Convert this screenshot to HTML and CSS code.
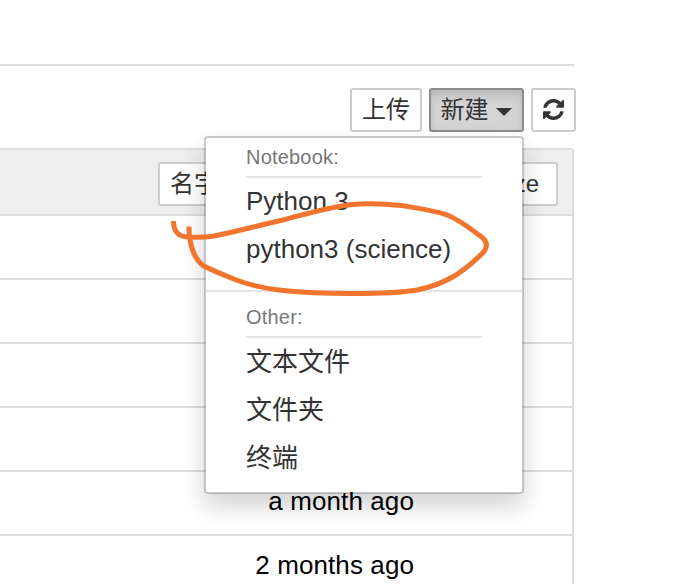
FILE: index.html
```html
<!DOCTYPE html>
<html lang="zh-CN">
<head>
<meta charset="utf-8">
<title>Jupyter</title>
<link rel="stylesheet" href="styles.css">
</head>
<body>
<main class="page">
  <div class="tabs"></div>
  <div class="toolbar">
    <button class="btn upload">上传</button>
    <div class="dropdown">
      <button class="btn active">新建<span class="caret"></span></button>
      <div class="menu">
        <div class="heading">Notebook:</div>
        <a class="item kernel">Python 3</a>
        <a class="item kernel">python3 (science)</a>
        <div class="divider"></div>
        <div class="heading">Other:</div>
        <a class="item">文本文件</a>
        <a class="item">文件夹</a>
        <a class="item">终端</a>
      </div>
    </div>
    <button class="btn refresh" aria-label="刷新">
      <svg viewBox="0 0 1536 1536"><path d="M1511 928q0 5-1 7-64 268-268 434.5t-478 166.5q-146 0-282.5-55t-243.5-157l-129 129q-19 19-45 19t-45-19-19-45v-448q0-26 19-45t45-19h448q26 0 45 19t19 45-19 45l-137 137q71 66 161 102t187 36q134 0 250-65t186-179q11-17 53-117 8-23 30-23h192q13 0 22.5 9.5t9.5 22.5zm25-800v448q0 26-19 45t-45 19h-448q-26 0-45-19t-19-45 19-45l138-138q-148-137-349-137-134 0-250 65t-186 179q-11 17-53 117-8 23-30 23h-199q-13 0-22.5-9.5t-9.5-22.5v-7q65-268 270-434.5t480-166.5q146 0 284 55.5t245 156.5l130-129q19-19 45-19t45 19 19 45z"/></svg>
    </button>
  </div>
  <div class="list">
    <div class="list-header">
      <button class="btn sort-name">名字</button>
      <button class="btn sort-size">size</button>
    </div>
    <div class="row"></div>
    <div class="row"></div>
    <div class="row"></div>
    <div class="row"></div>
    <div class="row">a month ago</div>
    <div class="row">2 months ago</div>
  </div>
</main>
<svg class="annotation" viewBox="0 0 684 584">
  <path d="M173.500 221C173.500 232 179 237 188 237C198 237.500 205 237.500 214 236C237 231.500 260 225 283 220C306 214 325 208 350 204.700C367 203.200 385 203.800 401 205.500C417 208 432 210 446 214.500C460 220 471 229 481 236.500C487 241 488 246 484 251.500C477 259 466 268.500 456 275C443 283 432 287 417 290C396 293.700 372 293.500 350 293.500C328 293.500 304 292.800 283 290.500C266 288.500 250 285.500 235 279.500C222 274 212 270.500 203 265.500C194 259 189 244 189 226.500"/>
</svg>
</body>
</html>
```
FILE: styles.css
```css
* { box-sizing: border-box; }
body {
  margin: 0;
  width: 684px;
  height: 584px;
  overflow: hidden;
  background: #fff;
  color: #000;
  font-family: "Liberation Sans", "Noto Sans CJK SC", sans-serif;
  font-size: 26px;
}
.page { width: 576px; }
.tabs { width: 574px; height: 66px; border-bottom: 2px solid #ddd; }
.toolbar {
  display: flex;
  justify-content: flex-end;
  gap: 7px;
  height: 82px;
  padding-top: 22px;
}
.btn {
  display: flex;
  align-items: center;
  justify-content: center;
  height: 44px;
  padding: 0 10px;
  border: 2px solid #ccc;
  border-radius: 3px;
  background: #fff;
  color: #333;
  font: inherit;
  font-size: 24px;
  line-height: 36px;
  white-space: nowrap;
}
.upload { width: 72px; }
.active {
  width: 95px;
  background: #d4d4d4;
  border-color: #8c8c8c;
  box-shadow: inset 0 6px 10px rgba(0, 0, 0, .125);
}
.caret {
  margin: 3px 1px 0 7px;
  border-top: 8px solid #333;
  border-left: 8px solid transparent;
  border-right: 8px solid transparent;
}
.refresh { width: 45px; }
.refresh svg { width: 21px; height: 21px; flex: none; margin-bottom: 2px; fill: #333; }
.dropdown { position: relative; }
.menu {
  position: absolute;
  top: 48px;
  right: 0;
  z-index: 1;
  width: 320px;
  height: 358px;
  padding-top: 1px;
  border: 2px solid rgba(0, 0, 0, .2);
  border-radius: 4px;
  background: #fff;
  background-clip: padding-box;
  box-shadow: 0 12px 24px rgba(0, 0, 0, .175);
}
.heading {
  width: 236px;
  height: 39px;
  margin-left: 40px;
  border-bottom: 2px solid #e5e5e5;
  color: #777;
  font-size: 20px;
  letter-spacing: .2px;
  line-height: 37px;
}
.item {
  display: block;
  height: 48px;
  padding-left: 40px;
  color: #333;
  line-height: 48px;
  white-space: nowrap;
}
.kernel { line-height: 46px; }
.divider { height: 2px; margin: 16px 0 7px; background: #e5e5e5; }
.list {
  width: 574px;
  border: 2px solid #ddd;
  border-left: 0;
  border-radius: 0 4px 0 0;
}
.list-header {
  display: flex;
  justify-content: space-between;
  height: 64px;
  padding: 12px 14px 0 158px;
  background: #eee;
}
.sort-size { padding-right: 17px; }
.row {
  height: 64px;
  padding-right: 158px;
  border-top: 2px solid #ddd;
  letter-spacing: .1px;
  line-height: 58px;
  text-align: right;
}
.annotation {
  position: absolute;
  inset: 0;
  z-index: 2;
  width: 684px;
  height: 584px;
  fill: none;
  stroke: #f2752e;
  stroke-width: 5;
  stroke-linejoin: round;
  pointer-events: none;
}
```
